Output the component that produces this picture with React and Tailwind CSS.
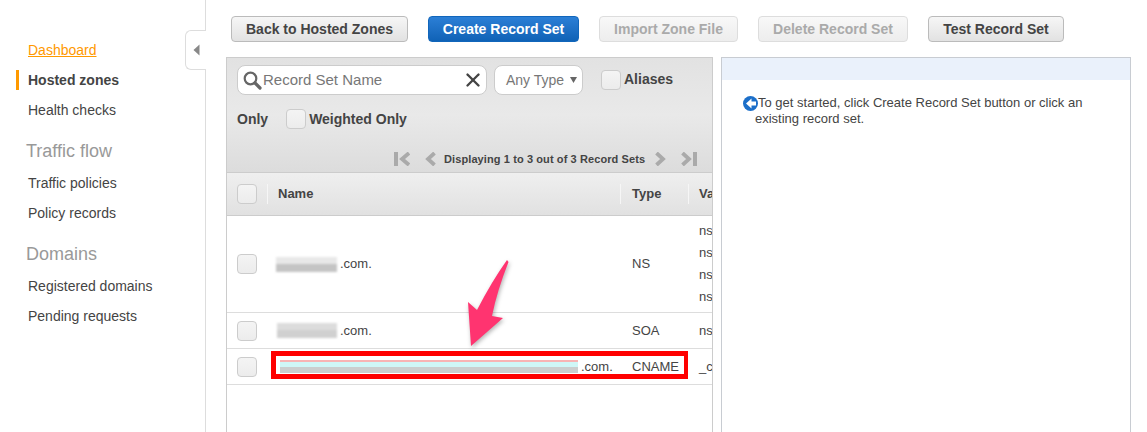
import { X } from 'lucide-react'

const font = { fontFamily: '"Liberation Sans", Arial, sans-serif' }

function NavItem({ label, active }) {
  return (
    <div className={`h-[30px] flex items-center pl-[28px] text-[14px] relative ${active ? 'font-bold text-[#444]' : 'text-[#444]'}`}>
      {active && <span className="absolute left-[16px] top-[5px] w-[3px] h-[20px] bg-[#f90]"></span>}
      {label}
    </div>
  )
}

function NavTitle({ label, className }) {
  return <div className={`pl-[26px] text-[18px] leading-[22px] text-[#999] ${className}`}>{label}</div>
}

function Sidebar() {
  return (
    <aside className="w-[206px] shrink-0 border-r border-[#ddd] pt-[35px] relative">
      <div className="h-[30px] flex items-center pl-[28px] text-[14px] text-[#f90] underline">Dashboard</div>
      <NavItem label="Hosted zones" active />
      <NavItem label="Health checks" />
      <NavTitle label="Traffic flow" className="mt-[15px] mb-[6px]" />
      <NavItem label="Traffic policies" />
      <NavItem label="Policy records" />
      <NavTitle label="Domains" className="mt-[15px] mb-[6px]" />
      <NavItem label="Registered domains" />
      <NavItem label="Pending requests" />
      <div className="absolute left-[185px] top-[30px] w-[21px] h-[40px] bg-white border border-r-0 border-[#ddd] rounded-l-[6px] flex items-center justify-center">
        <svg width="7" height="12" viewBox="0 0 7 12"><path d="M6.5 0.5V11.5L0.5 6Z" fill="#888" /></svg>
      </div>
    </aside>
  )
}

function Button({ label, w, kind }) {
  const styles = {
    normal: 'border-[#bbb] bg-gradient-to-b from-[#f6f6f6] to-[#e2e2e2] text-[#444]',
    primary: 'border-[#1166bb] bg-gradient-to-b from-[#2b7fd6] to-[#0f62b6] text-white',
    disabled: 'border-[#ddd] bg-gradient-to-b from-[#f8f8f8] to-[#ededed] text-[#aaa]',
  }
  return (
    <button className={`h-[26px] rounded-[4px] border text-[14px] font-bold flex items-center justify-center ${styles[kind]}`} style={{ width: w }}>
      {label}
    </button>
  )
}

function Check({ className = '' }) {
  return <span className={`block w-[20px] h-[20px] rounded-[4px] border border-[#ccc] bg-gradient-to-b from-[#f4f4f4] to-[#ececec] shrink-0 ${className}`}></span>
}

function Pager() {
  return (
    <div className="h-[20px] flex items-center pl-[157px] text-[#444]">
      <svg width="16" height="14" viewBox="0 0 16 14" className="shrink-0">
        <path d="M0 0H4V14H0Z" fill="#aaa" />
        <path d="M15 1L8 7L15 13" fill="none" stroke="#aaa" strokeWidth="3.8" />
      </svg>
      <svg width="11" height="14" viewBox="0 0 11 14" className="ml-[15px] shrink-0">
        <path d="M9.5 1L3 7L9.5 13" fill="none" stroke="#aaa" strokeWidth="3.8" />
      </svg>
      <span className="ml-[8px] w-[201px] text-[11px] font-bold tracking-[0.1px] whitespace-nowrap">Displaying 1 to 3 out of 3 Record Sets</span>
      <svg width="11" height="14" viewBox="0 0 11 14" className="ml-[10px] shrink-0">
        <path d="M1.5 1L8 7L1.5 13" fill="none" stroke="#aaa" strokeWidth="3.8" />
      </svg>
      <svg width="16" height="14" viewBox="0 0 16 14" className="ml-[15px] shrink-0">
        <path d="M12 0H16V14H12Z" fill="#aaa" />
        <path d="M1.5 1L8 7L1.5 13" fill="none" stroke="#aaa" strokeWidth="3.8" />
      </svg>
    </div>
  )
}

function Toolbar() {
  return (
    <div className="h-[115px] bg-gradient-to-b from-[#e2e2e2] via-[#e9e9e9] to-[#dcdcdc] border-b border-[#ccc] pl-[10px] pt-[7px]">
      <div className="flex items-center h-[30px]">
        <div className="w-[250px] h-[30px] bg-white border border-[#ccc] rounded-[8px] flex items-center pl-[5px] pr-[2px]">
          <svg width="19" height="19" viewBox="0 0 19 19" className="shrink-0">
            <circle cx="7.5" cy="7.5" r="5.8" fill="none" stroke="#666" strokeWidth="2.2" />
            <path d="M12 12L17 17" stroke="#666" strokeWidth="3.2" strokeLinecap="round" />
          </svg>
          <span className="ml-[1px] text-[15px] text-[#777] flex-1">Record Set Name</span>
          <X size={22} strokeWidth={2.6} color="#444" />
        </div>
        <div className="ml-[7px] w-[89px] h-[30px] bg-white border border-[#ccc] rounded-[8px] flex items-center pl-[11px] text-[14px] text-[#777]">
          Any Type
          <svg width="7" height="6" viewBox="0 0 7 6" className="ml-[6px]"><path d="M0 0H7L3.5 6Z" fill="#666" /></svg>
        </div>
        <Check className="ml-[18px]" />
        <span className="ml-[3px] mb-[2px] text-[14px] font-bold text-[#444]">Aliases</span>
      </div>
      <div className="flex items-center h-[20px] mt-[14px] text-[14px] font-bold text-[#444]">
        <span>Only</span>
        <Check className="ml-[18px]" />
        <span className="ml-[3px]">Weighted Only</span>
      </div>
      <div className="mt-[20px]"><Pager /></div>
    </div>
  )
}

const cols = 'grid grid-cols-[40px_353px_68px_24px]'

// the redacted domain names in the screenshot
function Blur({ w, wide, dark }) {
  if (wide) {
    return (
      <span className="block shrink-0 h-[13px] mt-[-1px]" style={{ width: w }}>
        <span className="block h-[2px] bg-[#f8b4b4]"></span>
        <span className="block h-[5px] bg-[#cff7f7]"></span>
        <span className="block h-[6px] bg-[#cbcece]"></span>
      </span>
    )
  }
  return (
    <span className="block shrink-0 h-[15px] blur-[1px]" style={{ width: w }}>
      <span className={`block h-[7px] ${dark ? 'bg-[#dcdcdc]' : 'bg-[#e8e8e8]'}`}></span>
      <span className={`block h-[8px] ${dark ? 'bg-[#d0d0d0]' : 'bg-[#c4c4c4]'}`}></span>
    </span>
  )
}

function Row({ blurW, blurLeft, h, type, value, wide, dark }) {
  return (
    <div className={`${cols} border-b border-[#ddd] items-center text-[13px] text-[#444]`} style={{ height: h }}>
      <div className="pl-[10px]"><Check /></div>
      <div className="flex items-center" style={{ paddingLeft: blurLeft }}>
        <Blur w={blurW} wide={wide} dark={dark} />
        <span className="ml-[3px]">.com.</span>
      </div>
      <div className="pl-[12px]">{type}</div>
      <div className="pl-[11px] overflow-hidden whitespace-nowrap">{value}</div>
    </div>
  )
}

function RecordTable() {
  const ns = (
    <div className="leading-[22px]">
      <div>ns</div>
      <div>ns</div>
      <div>ns</div>
      <div>ns</div>
    </div>
  )
  return (
    <div className="relative">
      <div className={`${cols} h-[43px] items-center border-b border-[#ccc] bg-gradient-to-b from-[#efefef] to-[#e1e1e1] text-[13px] font-bold text-[#444]`}>
        <div className="pl-[10px]"><Check /></div>
        <div className="h-[20px] border-l border-[#f6f6f6] pl-[10px] leading-[20px]">Name</div>
        <div className="h-[20px] border-l border-[#f6f6f6] pl-[11px] leading-[20px]">Type</div>
        <div className="h-[20px] border-l border-[#f6f6f6] pl-[10px] leading-[20px] overflow-hidden">Value</div>
      </div>
      <Row h={97} blurW={61} blurLeft={9} type="NS" value={ns} />
      <Row h={36} blurW={60} blurLeft={10} type="SOA" value="ns" dark />
      <Row h={36} blurW={298} blurLeft={13} type="CNAME" value="_c" wide />
      <div className="absolute left-[44px] top-[178px] w-[417px] h-[28px] border-[5px] border-r-[4px] border-[#f00]"></div>
      <svg width="60" height="100" viewBox="0 0 60 100" className="absolute left-[233px] top-[86px] overflow-visible" style={{ filter: 'drop-shadow(1px 2px 2px rgba(0,0,0,0.3))' }}>
        <path d="M47 1L48.5 3Q37 32 32 57L43 59L11 87L8 43L17 51Q32 22 47 1Z" fill="#ff3470" />
      </svg>
    </div>
  )
}

function DetailPanel() {
  return (
    <div className="w-[410px] ml-[8px] border border-b-0 border-[#c8ccd2] shrink-0">
      <div className="h-[22px] bg-[#eaf1fb]"></div>
      <div className="pt-[15px] pl-[33px] pr-[40px] text-[13px] leading-[16px] text-[#444] relative">
        <svg width="15" height="15" viewBox="0 0 15 15" className="absolute left-[21px] top-[16px]">
          <circle cx="7.5" cy="7.5" r="7.5" fill="#1c6fc9" />
          <path d="M8.5 2.5L3 7.5L8.5 12.5V9.5H13V5.5H8.5Z" fill="#fff" />
        </svg>
        <span className="ml-[3px]">To get started, click Create Record Set button or click an</span>
        <br />existing record set.
      </div>
    </div>
  )
}

export default function App() {
  return (
    <div className="w-[1147px] h-[432px] overflow-hidden flex bg-white" style={font}>
      <Sidebar />
      <main className="flex-1 min-w-0 flex flex-col">
        <div className="flex gap-[20px] pt-[16px] pl-[25px]">
          <Button label="Back to Hosted Zones" w={177} kind="normal" />
          <Button label="Create Record Set" w={151} kind="primary" />
          <Button label="Import Zone File" w={139} kind="disabled" />
          <Button label="Delete Record Set" w={150} kind="disabled" />
          <Button label="Test Record Set" w={136} kind="normal" />
        </div>
        <div className="flex flex-1 mt-[15px] pl-[20px]">
          <div className="w-[487px] shrink-0 border border-b-0 border-[#ccc] overflow-hidden">
            <Toolbar />
            <RecordTable />
          </div>
          <DetailPanel />
        </div>
      </main>
    </div>
  )
}
